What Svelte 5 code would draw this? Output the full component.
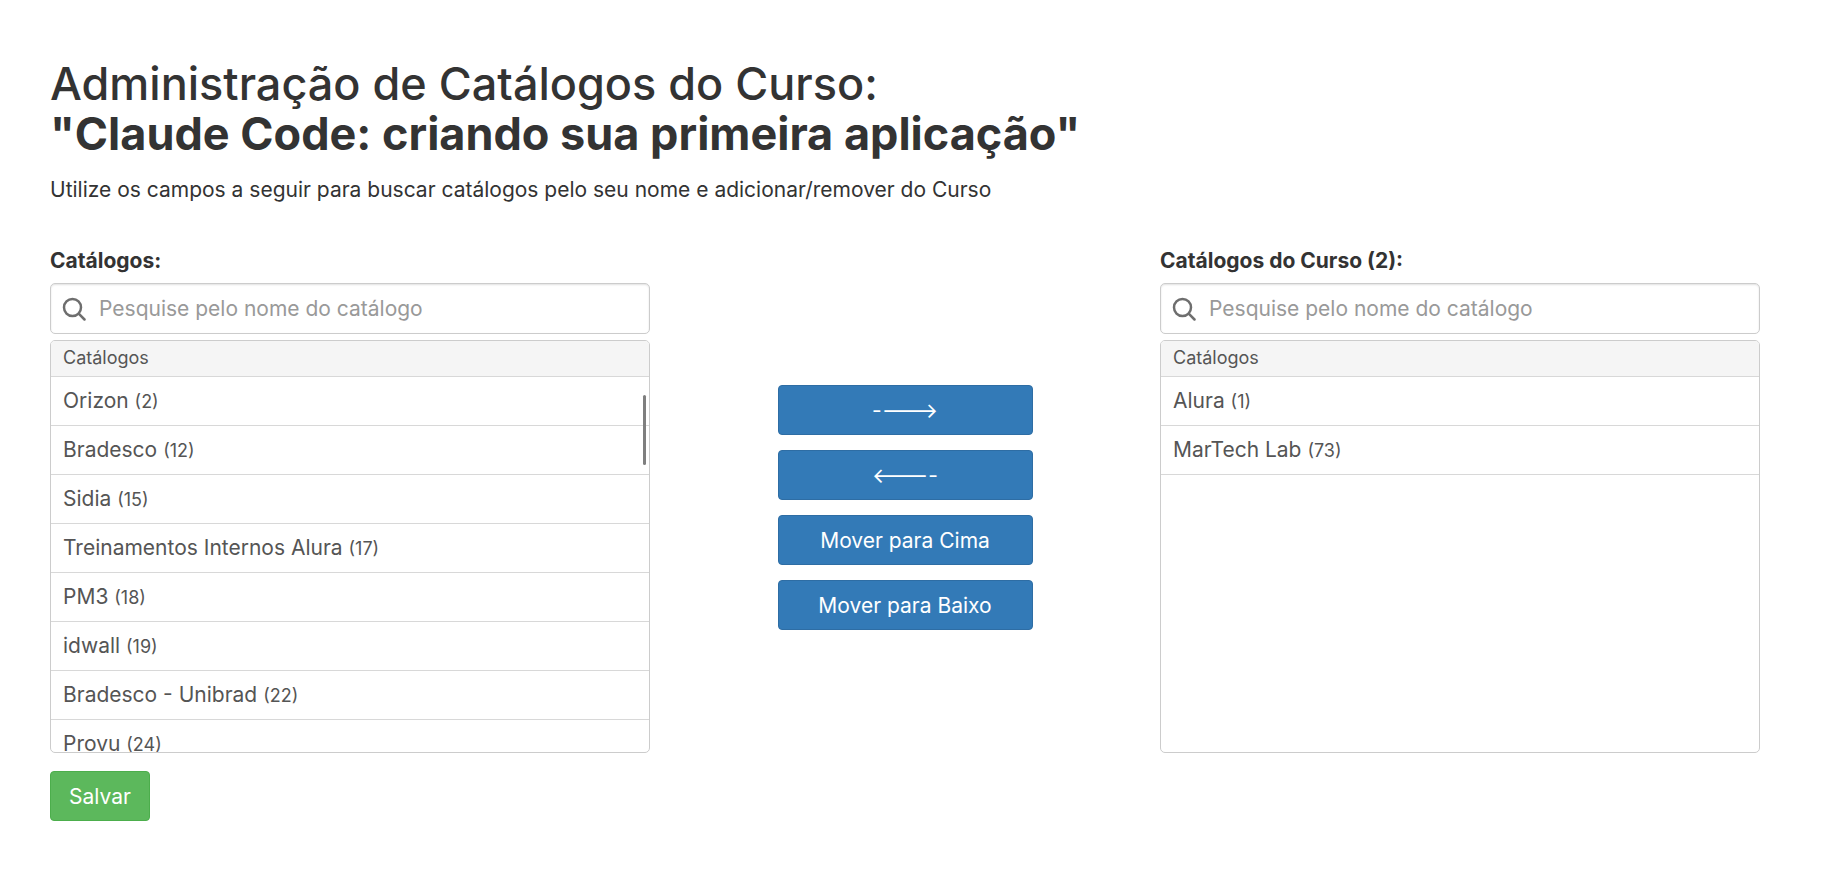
<script>
  const catalogs = [
    { name: 'Orizon', id: 2 },
    { name: 'Bradesco', id: 12 },
    { name: 'Sidia', id: 15 },
    { name: 'Treinamentos Internos Alura', id: 17 },
    { name: 'PM3', id: 18 },
    { name: 'idwall', id: 19 },
    { name: 'Bradesco - Unibrad', id: 22 },
    { name: 'Provu', id: 24 }
  ];
  const courseCatalogs = [
    { name: 'Alura', id: 1 },
    { name: 'MarTech Lab', id: 73 }
  ];
  const placeholder = 'Pesquise pelo nome do catálogo';
</script>

{#snippet picker(label, items, scrollbar)}
  <section class="picker">
    <label class="picker-label" for={label}>{label}</label>
    <div class="search">
      <svg class="search-icon" viewBox="0 0 24 24" width="24" height="24" fill="none" stroke="#6e6e6e" stroke-width="2.5" stroke-linecap="round">
        <circle cx="10.5" cy="10.5" r="8.5" />
        <path d="M16.7 16.7 22.5 22.5" />
      </svg>
      <input id={label} type="text" {placeholder} />
    </div>
    <div class="list">
      <div class="list-head">Catálogos</div>
      <ul>
        {#each items as item}
          <li>{item.name} <small>({item.id})</small></li>
        {/each}
      </ul>
      {#if scrollbar}<span class="thumb"></span>{/if}
    </div>
  </section>
{/snippet}

<main>
  <h1><span class="title-line">Administração de Catálogos do Curso:</span><br /><strong>"Claude Code: criando sua primeira aplicação"</strong></h1>
  <p class="hint">Utilize os campos a seguir para buscar catálogos pelo seu nome e adicionar/remover do Curso</p>

  <div class="columns">
    {@render picker('Catálogos:', catalogs, true)}
    <div class="actions">
      <button class="btn primary">-&zwnj;---&gt;</button>
      <button class="btn primary">&lt;---&zwnj;-</button>
      <button class="btn primary">Mover para Cima</button>
      <button class="btn primary">Mover para Baixo</button>
    </div>
    {@render picker('Catálogos do Curso (2):', courseCatalogs, false)}
  </div>

  <button class="btn success">Salvar</button>
</main>

<style>
  :global(body) {
    background: #fff;
  }

  main {
    padding: 59px 68px 0 50px;
    font-family: Inter, "Liberation Sans", sans-serif;
    color: #333;
  }

  h1 {
    margin: 0;
    font-size: 45px;
    font-weight: 400;
    line-height: 50px;
  }

  .title-line {
    font-weight: 450;
  }

  h1 strong {
    font-weight: 700;
  }

  .hint {
    margin: 18px 0 0;
    font-size: 21px;
    line-height: 25px;
  }

  .columns {
    display: flex;
    justify-content: space-between;
    margin-top: 46px;
  }

  .picker {
    width: 600px;
  }

  .picker-label {
    display: block;
    font-size: 21px;
    font-weight: 700;
    line-height: 25px;
    margin-bottom: 10px;
  }

  .search {
    display: flex;
    align-items: center;
    gap: 13px;
    height: 51px;
    box-sizing: border-box;
    padding: 0 11px;
    border: 1px solid #ccc;
    border-radius: 5px;
    box-shadow: inset 0 1px 2px rgba(0, 0, 0, 0.12);
  }

  .search input {
    flex: 1;
    min-width: 0;
    border: 0;
    outline: 0;
    padding: 0;
    font: inherit;
    font-size: 21px;
    color: #555;
    background: transparent;
  }

  .search input::placeholder {
    color: #999;
    opacity: 1;
  }

  .list {
    position: relative;
    height: 413px;
    margin-top: 6px;
    box-sizing: border-box;
    border: 1px solid #ccc;
    border-radius: 5px;
    overflow: hidden;
    color: #555;
  }

  .list-head {
    height: 36px;
    box-sizing: border-box;
    padding-left: 12px;
    background: #f5f5f5;
    border-bottom: 1px solid #d8d8d8;
    font-size: 18px;
    line-height: 34px;
    color: #555;
  }

  ul {
    margin: 0;
    padding: 0;
    list-style: none;
  }

  li {
    height: 49px;
    box-sizing: border-box;
    padding-left: 12px;
    border-bottom: 1px solid #d8d8d8;
    font-size: 21px;
    line-height: 47px;
  }

  small {
    font-size: 18px;
  }

  .thumb {
    position: absolute;
    top: 54px;
    right: 3px;
    width: 3px;
    height: 70px;
    border-radius: 2px;
    background: #7f7f7f;
  }

  .actions {
    display: flex;
    flex-direction: column;
    gap: 15px;
    width: 255px;
    padding-top: 137px;
  }

  .btn {
    height: 50px;
    box-sizing: border-box;
    border-radius: 4px;
    font: inherit;
    font-size: 21px;
    color: #fff;
    padding: 0;
  }

  .primary {
    background: #337ab7;
    border: 1px solid #2e6da4;
  }

  .success {
    display: block;
    width: 100px;
    margin-top: 18px;
    background: #5cb85c;
    border: 1px solid #4cae4c;
  }
</style>
